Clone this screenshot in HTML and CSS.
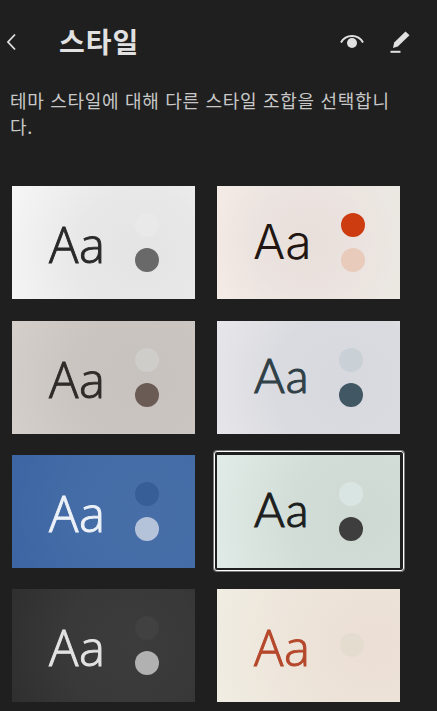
FILE: index.html
```html
<!DOCTYPE html>
<html lang="ko">
<head>
    <meta charset="UTF-8">
    <meta name="viewport" content="width=device-width, initial-scale=1.0">
    <title>스타일</title>
    <link rel="stylesheet" href="styles.css">
</head>
<body>
    <header class="header">
        <svg class="back" width="12" height="18" viewBox="0 0 12 18"><path d="M10 1.500 3 9l7 7.500"/></svg>
        <h1>스타일</h1>
        <div class="actions">
            <svg width="26" height="16" viewBox="0 0 26 16">
                <path class="lid" d="M2 8.500C4.500 4 8.500 2 13 2s8.500 2 11 6.500"/>
                <circle cx="13" cy="9" r="5"/>
            </svg>
            <svg width="22" height="24" viewBox="0 0 22 24">
                <path d="M16.500 1.500 20.500 5.300 8.800 16.500 4 18 5.200 12.500Z"/>
                <path d="M1.500 20.800h10v2h-10z"/>
            </svg>
        </div>
    </header>
    <p class="description">테마 스타일에 대해 다른 스타일 조합을 선택합니다.</p>
    <main class="styles">
        <div class="card light">
            <span class="sample">Aa</span>
            <div class="dots"><i></i><i></i></div>
        </div>
        <div class="card blush grotesk">
            <span class="sample">Aa</span>
            <div class="dots"><i></i><i></i></div>
        </div>
        <div class="card stone">
            <span class="sample">Aa</span>
            <div class="dots"><i></i><i></i></div>
        </div>
        <div class="card mist geometric">
            <span class="sample">Aa</span>
            <div class="dots"><i></i><i></i></div>
        </div>
        <div class="card blue">
            <span class="sample">Aa</span>
            <div class="dots"><i></i><i></i></div>
        </div>
        <div class="card mint geometric selected">
            <span class="sample">Aa</span>
            <div class="dots"><i></i><i></i></div>
        </div>
        <div class="card dark">
            <span class="sample">Aa</span>
            <div class="dots"><i></i><i></i></div>
        </div>
        <div class="card cream">
            <span class="sample">Aa</span>
            <div class="dots"><i></i></div>
        </div>
    </main>
</body>
</html>
```

FILE: styles.css
```css
* {
    box-sizing: border-box;
}
body {
    margin: 0;
    height: 711px;
    overflow: hidden;
    background: #1f1f1f;
    color: #e1e1e1;
    font-family: "Noto Sans CJK KR", sans-serif;
}
.header {
    display: flex;
    align-items: center;
    height: 84px;
    padding: 0 26px 0 5px;
}
.header svg {
    fill: #e1e1e1;
}
.header .back {
    fill: none;
    stroke: #e1e1e1;
    stroke-width: 1.8;
}
.header .lid {
    fill: none;
    stroke: #e1e1e1;
    stroke-width: 2;
}
h1 {
    margin: 0 0 2px 42px;
    font-size: 28px;
    line-height: 40px;
    font-weight: 700;
    letter-spacing: 1px;
}
.actions {
    display: flex;
    align-items: center;
    gap: 24px;
    margin-left: auto;
}
.description {
    height: 102px;
    margin: 0;
    padding: 3px 30px 0 10px;
    color: #c8c8c8;
    font-size: 18px;
    line-height: 26px;
    letter-spacing: 0.7px;
    word-break: break-all;
}
.styles {
    display: grid;
    grid-template-columns: 183px 183px;
    grid-template-rows: 114px 113px 113px 113px;
    gap: 21px 22px;
    padding-left: 12px;
}
.card {
    display: flex;
    height: 113px;
    padding: 27px 0 0 37px;
}
.sample {
    width: 86px;
    font-family: "Open Sans", sans-serif;
    font-size: 49px;
    font-weight: 300;
    line-height: 62px;
    letter-spacing: 0.5px;
    -webkit-text-stroke: 0.9px currentColor;
}
.dots {
    display: flex;
    flex-direction: column;
    gap: 11px;
}
.dots i {
    width: 24px;
    height: 24px;
    border-radius: 50%;
}
.grotesk .sample {
    width: 88px;
    margin-left: -1px;
    font-family: Inter, sans-serif;
    font-size: 48px;
    line-height: 58px;
    letter-spacing: 0;
    -webkit-text-stroke: 0;
}
.geometric .sample {
    width: 85px;
    font-family: Lato, sans-serif;
    font-size: 47px;
    line-height: 54px;
    letter-spacing: 1px;
    -webkit-text-stroke: 1.2px currentColor;
}
.light {
    background: radial-gradient(circle at 70% 60%, #e4e4e4 0%, #e8e8e8 45%, #f6f6f6 100%);
    color: #292929;
}
.light i:first-child { background: #e9e9e9; }
.light i:last-child { background: #696969; }
.blush {
    background: radial-gradient(circle at 50% 50%, #e8dfdb 0%, #ebe3df 50%, transparent 100%), linear-gradient(90deg, #f6ece7, #ebe9e3);
    color: #211611;
}
.blush i:first-child { background: #cd3c10; }
.blush i:last-child { background: #e8cbba; }
.stone {
    background: radial-gradient(circle at 70% 50%, #c7c2be 0%, #cac5c1 50%, #d4cfca 100%);
    color: #2f2b29;
}
.stone i:first-child { background: #cecdc9; }
.stone i:last-child { background: #6a5c54; }
.mist {
    background: radial-gradient(circle at 70% 55%, #d7d9de 0%, #dadbe0 50%, #e7e6eb 100%);
    color: #304047;
}
.mist i:first-child { background: #c9d0d6; }
.mist i:last-child { background: #415763; }
.blue {
    background: radial-gradient(circle at 75% 50%, #476ea7 0%, #446ca6 50%, #3d65a3 100%);
    color: #edf2f8;
}
.blue i:first-child { background: #385e97; }
.blue i:last-child { background: #b4c2da; }
.mint {
    background: radial-gradient(circle at 80% 55%, #cfd9d4 0%, #d3ddd8 45%, #e1ebe7 100%);
    color: #1c1f1e;
}
.mint i:first-child { background: #d9e5e2; }
.mint i:last-child { background: #3e3e3e; }
.selected {
    position: relative;
}
/* selection ring around the card */
.selected::after {
    content: "";
    position: absolute;
    inset: -4px -4px -3px -3px;
    border: 1px solid #fff;
    border-radius: 3px;
    box-shadow: 0 0 0 1px #777;
}
.dark {
    background: radial-gradient(circle at 65% 50%, #3c3c3c 0%, #393939 50%, #2f2f2f 100%);
    color: #e3e3e3;
}
.dark i:first-child { background: #414141; }
.dark i:last-child { background: #b1b1b1; }
.cream {
    background: radial-gradient(circle at 85% 50%, #ecdfd5 0%, #ede4da 50%, #f0ede2 100%);
    color: #b5472b;
}
.cream i {
    margin-top: 17px;
    background: #e5dcd0;
}
```
